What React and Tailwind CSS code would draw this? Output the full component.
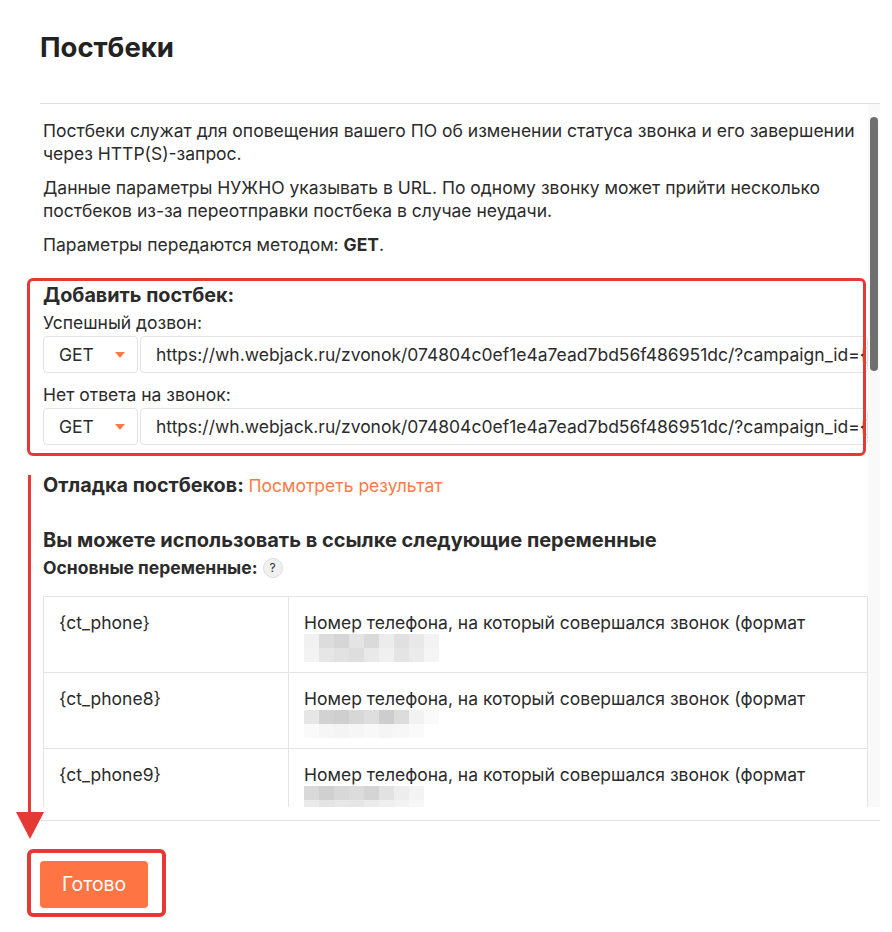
import React from "react";

const URL =
  "https://wh.webjack.ru/zvonok/074804c0ef1e4a7ead7bd56f486951dc/?campaign_id={campaign_id}&phone={ct_phone}&status={ct_status}";

const rows = [
  {
    name: "{ct_phone}",
    blur: [
      ["#f1f1f1", "#dcdcdc", "#d6d6d6", "#e4e4e4", "#dadada", "#ececec", "#e0e0e0", "#e8e8e8", "#f3f3f3"],
      ["#f3f3f3", "#e6e6e6", "#e2e2e2", "#dedede", "#e9e9e9", "#f0f0f0", "#e4e4e4", "#ebebeb", "#f5f5f5"],
    ],
  },
  {
    name: "{ct_phone8}",
    blur: [
      ["#e6e6e6", "#d2d2d2", "#cfcfcf", "#d7d7d7", "#dedede", "#cdcdcd", "#dcdcdc", "#f2f2f2", "#fafafa"],
      ["#fafafa", "#f6f6f6", "#f4f4f4", "#f6f6f6", "#f8f8f8", "#f5f5f5", "#f7f7f7", "#fafafa", "#ffffff"],
    ],
  },
  {
    name: "{ct_phone9}",
    blur: [
      ["#d9d9d9", "#d0d0d0", "#d8d8d8", "#dcdcdc", "#d4d4d4", "#e2e2e2", "#ededed", "#f3f3f3"],
      ["#eaeaea", "#e4e4e4", "#e8e8e8", "#e6e6e6", "#ebebeb", "#efefef", "#f2f2f2", "#f6f6f6"],
    ],
  },
];

const Blur = ({ cells }) => (
  <div className="flex flex-col">
    {cells.map((line, i) => (
      <div key={i} className="flex">
        {line.map((c, j) => (
          <div key={j} className="w-[15px] h-[14px]" style={{ background: c }} />
        ))}
      </div>
    ))}
  </div>
);

const MethodRow = () => (
  <div className="flex gap-[2px] h-[37px]">
    <div className="w-[95px] shrink-0 flex items-center justify-between pl-[15px] pr-[12px] border border-[#e3e3e6] rounded-[4px]">
      <span>GET</span>
      <svg width="10" height="6" viewBox="0 0 10 6">
        <path d="M0 0 H10 L5 6 Z" fill="#ff7a45" />
      </svg>
    </div>
    <div className="flex-1 min-w-0 flex items-center pl-[15px] border border-[#e3e3e6] rounded-[4px] overflow-hidden whitespace-nowrap">
      {URL}
    </div>
  </div>
);

export default function App() {
  return (
    <div
      className="relative w-full h-[932px] bg-white text-[#2b2b2b] overflow-hidden"
      style={{ fontFamily: "Inter, 'Noto Sans', sans-serif" }}
    >
      <div className="pl-[40px] pr-[12px]">
        {/* HEADER */}
        <div className="h-[104px] pt-[31px] border-b border-[#e2e2e2]">
          <h1 className="text-[27.5px] leading-[32px] font-bold text-[#222]">Постбеки</h1>
        </div>

        {/* SCROLL AREA */}
        <div className="flex h-[703px]">
          <div className="flex-1 min-w-0 overflow-hidden pl-[3px] pt-[15px] text-[17.5px] leading-[23px]">
            <p className="mb-[11px]">
              Постбеки служат для оповещения вашего ПО об изменении статуса звонка и его завершении
              через HTTP(S)-запрос.
            </p>
            <p className="mb-[11px]">
              Данные параметры НУЖНО указывать в URL. По одному звонку может прийти несколько
              постбеков из-за переотправки постбека в случае неудачи.
            </p>
            <p>
              Параметры передаются методом: <b>GET</b>.
            </p>

            <h3 className="mt-[26px] text-[19.8px] leading-[27px] font-bold">Добавить постбек:</h3>
            <div className="mt-[2px] mb-[2px]">Успешный дозвон:</div>
            <MethodRow />
            <div className="mt-[10px] mb-[2px]">Нет ответа на звонок:</div>
            <MethodRow />

            <div className="mt-[27px] text-[19.8px] leading-[27px]">
              <span className="font-bold">Отладка постбеков: </span>
              <span className="text-[17.5px] text-[#ff7a45]">Посмотреть результат</span>
            </div>

            <h2 className="mt-[27px] text-[20px] leading-[28px] font-bold">
              Вы можете использовать в ссылке следующие переменные
            </h2>
            <div className="mt-[2px] flex items-center gap-[5px] font-bold">
              Основные переменные:
              <span className="w-[20px] h-[20px] rounded-full bg-[#f0f0f0] border border-[#dedede] flex items-center justify-center text-[12px] font-normal leading-none">
                ?
              </span>
            </div>

            {/* TABLE */}
            <div className="mt-[17px] border border-[#e3e3e8] w-[825px]">
              {rows.map((r, i) => (
                <div key={r.name} className={"flex " + (i > 0 ? "border-t border-[#e3e3e8]" : "")}>
                  <div className="w-[245px] shrink-0 px-[15px] py-[14px] border-r border-[#e3e3e8]">
                    {r.name}
                  </div>
                  <div className="flex-1 px-[15px] py-[14px] h-[75px]">
                    <div>Номер телефона, на который совершался звонок (формат</div>
                    <Blur cells={r.blur} />
                  </div>
                </div>
              ))}
            </div>
          </div>

          {/* SCROLLBAR */}
          <div className="w-[12px] shrink-0 bg-[#f9f9f9] pt-[13px] flex justify-center">
            <div className="w-[8px] h-[254px] rounded-full bg-[#6f6f6f]" />
          </div>
        </div>

        {/* FOOTER */}
        <div className="mt-[13px] border-t border-[#e2e2e2] pt-[40px]">
          <button className="w-[108px] h-[47px] rounded-[4px] bg-[#ff7443] text-white text-[19.4px]">
            Готово
          </button>
        </div>
      </div>

      {/* ANNOTATIONS */}
      <div className="absolute left-[27px] top-[278px] w-[839px] h-[178px] border-[3px] border-[#e53935] rounded-[6px]" />
      <div className="absolute left-[28px] top-[475px] w-[3px] h-[345px] bg-[#e53935]" />
      <svg className="absolute left-[16px] top-[812px]" width="28" height="27" viewBox="0 0 28 27">
        <path d="M0 0 L28 0 L14 27 Z" fill="#e53935" />
      </svg>
      <div className="absolute left-[27px] top-[849px] w-[139px] h-[68px] border-[4px] border-[#e53935] rounded-[6px]" />
    </div>
  );
}
